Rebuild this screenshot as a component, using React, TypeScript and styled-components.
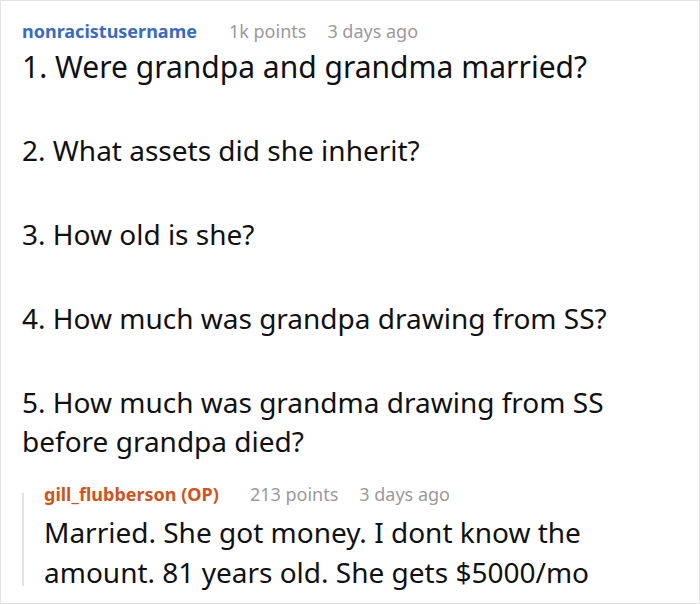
import React from "react";
import styled, { createGlobalStyle } from "styled-components";

const GlobalStyle = createGlobalStyle`
  html, body {
    margin: 0;
    padding: 0;
    background: #ffffff;
  }
  body {
    font-family: "Noto Sans", "Open Sans", sans-serif;
  }
`;

const Card = styled.div`
  box-sizing: border-box;
  width: 700px;
  height: 604px;
  border: 1px solid #e3e3e3;
  padding: 18px 21px 0 21px;
  overflow: hidden;
  background: #ffffff;
`;

const Meta = styled.div<{ $gap: number }>`
  display: flex;
  align-items: baseline;
  gap: ${(p) => p.$gap}px;
  font-size: 18px;
  line-height: 24px;
`;

const Author = styled.span<{ $op?: boolean }>`
  font-weight: 700;
  color: ${(p) => (p.$op ? "#d0541c" : "#3a6cbd")};
`;

const Muted = styled.span`
  color: #9a9a9a;
`;

const Stats = styled.div`
  display: flex;
  gap: 21px;
`;

const Body = styled.div`
  margin-top: 4px;
`;

const Para = styled.p<{ $size: number }>`
  margin: 0 0 45px 0;
  font-size: ${(p) => p.$size}px;
  line-height: 39px;
  color: #111111;

  &:last-child {
    margin-bottom: 0;
  }
`;

const Reply = styled.div`
  position: relative;
  margin-top: 21px;
  padding-left: 22px;

  &::before {
    content: "";
    position: absolute;
    left: 0;
    top: 11px;
    bottom: 6px;
    width: 2px;
    background: #e4e4e4;
  }
`;

const ReplyText = styled.p`
  margin: 6px 0 0 0;
  padding-right: 20px;
  font-size: 28px;
  line-height: 40px;
  color: #111111;
`;

const questions = [
  { text: "1. Were grandpa and grandma married?", size: 30 },
  { text: "2. What assets did she inherit?", size: 28 },
  { text: "3. How old is she?", size: 28 },
  { text: "4. How much was grandpa drawing from SS?", size: 28 },
  {
    text: "5. How much was grandma drawing from SS before grandpa died?",
    size: 28,
  },
];

export default function App() {
  return (
    <>
      <GlobalStyle />
      <Card>
        <Meta $gap={32}>
          <Author>nonracistusername</Author>
          <Stats>
            <Muted>1k points</Muted>
            <Muted>3 days ago</Muted>
          </Stats>
        </Meta>
        <Body>
          {questions.map((q) => (
            <Para key={q.text} $size={q.size}>
              {q.text}
            </Para>
          ))}
        </Body>
        <Reply>
          <Meta $gap={31}>
            <Author $op>gill_flubberson (OP)</Author>
            <Stats>
              <Muted>213 points</Muted>
              <Muted>3 days ago</Muted>
            </Stats>
          </Meta>
          <ReplyText>
            Married. She got money. I dont know the amount. 81 years old. She
            gets $5000/mo
          </ReplyText>
        </Reply>
      </Card>
    </>
  );
}
